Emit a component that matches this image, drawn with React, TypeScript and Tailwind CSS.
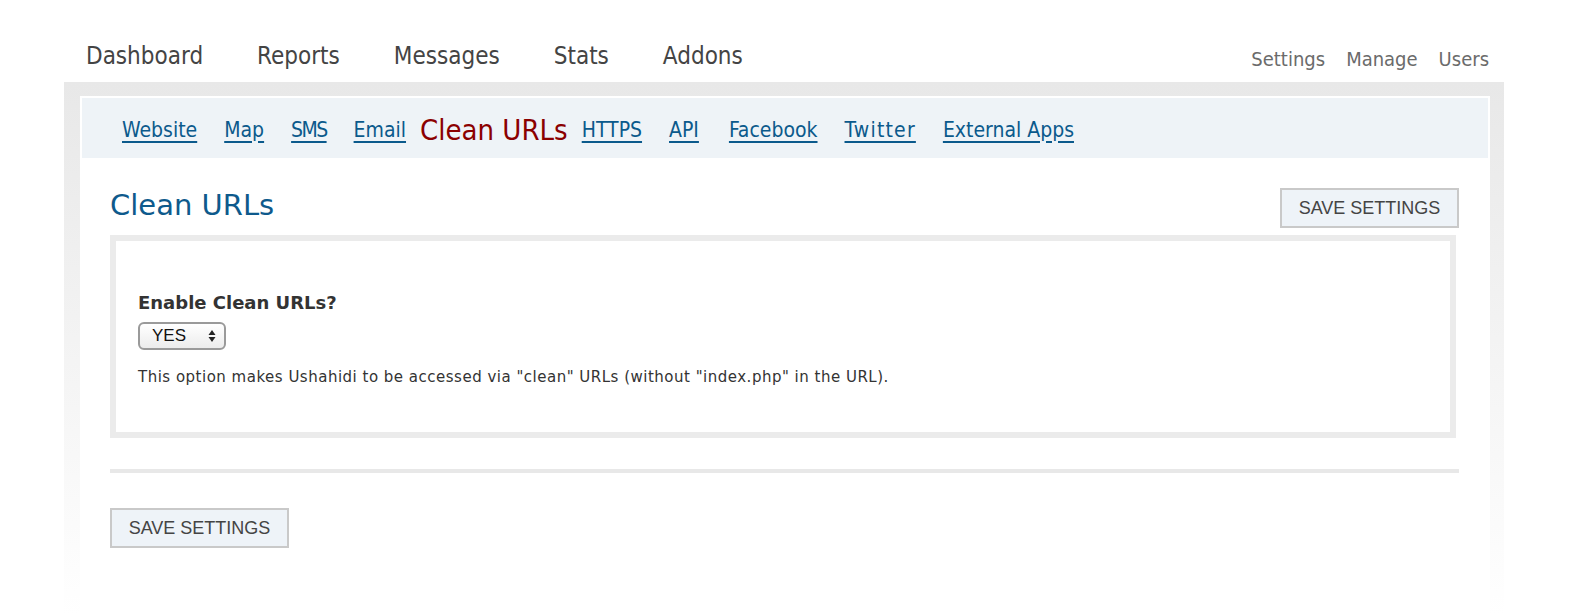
const TOP_NAV = ["Dashboard", "Reports", "Messages", "Stats", "Addons"];
const TOP_RIGHT = ["Settings", "Manage", "Users"];
const SUB_NAV = [
  "Website",
  "Map",
  "SMS",
  "Email",
  "Clean URLs",
  "HTTPS",
  "API",
  "Facebook",
  "Twitter",
  "External Apps",
];

// small per-link spacing tweaks so the condensed fallback lines up
const TRACKING: Record<string, string> = {
  SMS: "tracking-[-1.6px]",
  API: "mr-[30px]",
  Twitter: "tracking-[1.2px]",
};

const condensed = { fontFamily: '"DejaVu Sans Condensed", "DejaVu Sans", sans-serif' };
const regular = { fontFamily: '"DejaVu Sans", sans-serif' };

function SaveButton() {
  return (
    <button
      className="h-[40px] w-[179px] border-2 border-[#c9c9c9] bg-[#eef3f8] font-['Liberation_Sans',Arial,sans-serif] text-[18px] text-[#444]"
      type="button"
    >
      SAVE SETTINGS
    </button>
  );
}

export default function App() {
  return (
    <div className="h-[616px] w-full overflow-hidden bg-white" style={condensed}>
      <div className="ml-[64px] flex h-[82px] w-[1440px] items-end justify-between pb-[8px] pl-[22px] pr-[15px]">
        <nav className="flex gap-[54px] text-[24px] text-[#444]">
          {TOP_NAV.map((item) => (
            <span key={item}>{item}</span>
          ))}
        </nav>
        <nav className="flex gap-[21px] text-[20px] text-[#6b6b6b]">
          {TOP_RIGHT.map((item) => (
            <span key={item}>{item}</span>
          ))}
        </nav>
      </div>

      <div className="ml-[64px] h-[534px] w-[1440px] bg-gradient-to-b from-[#e8e8e8] to-white pl-[16px] pr-[14px] pt-[14px]">
        <div className="h-full bg-white p-[2px]">
          <div className="flex h-[60px] items-center bg-[#eef3f7] pl-[40px] pt-[5px] text-[21px]">
            {SUB_NAV.map((item) =>
              item === "Clean URLs" ? (
                <span key={item} className="mr-[14px] ml-[-13px] text-[29px] leading-none text-[#8b0000]">
                  {item}
                </span>
              ) : (
                <a
                  key={item}
                  className={`mr-[27px] text-[#0b5a8c] underline decoration-2 underline-offset-[4px] ${TRACKING[item] ?? ""}`}
                  href="#"
                >
                  {item}
                </a>
              ),
            )}
          </div>

          <div className="pl-[28px] pr-[29px] pt-[30px]">
            <div className="flex items-start justify-between">
              <h1 className="pt-[1px] text-[29px] leading-[32px] text-[#0e5a8c]" style={regular}>
                Clean URLs
              </h1>
              <SaveButton />
            </div>

            <div className="mr-[3px] mt-[7px] h-[203px] border-[6px] border-[#ebebeb] pl-[22px] pt-[48px]">
              <p className="text-[18px] font-bold text-[#333]" style={regular}>
                Enable Clean URLs?
              </p>
              <div className="mt-[6px] flex h-[28px] w-[88px] items-center justify-between rounded-[6px] border-2 border-[#9a9a9a] bg-gradient-to-b from-white to-[#ececec] pl-[12px] pr-[8px] font-['Liberation_Sans',Arial,sans-serif] text-[17px] text-[#111]">
                <span>YES</span>
                <svg width="8" height="14" viewBox="0 0 8 14">
                  <path d="M4 1 L7.5 6 L0.5 6 Z" fill="#222" />
                  <path d="M4 13 L7.5 8 L0.5 8 Z" fill="#222" />
                </svg>
              </div>
              <p className="mt-[16px] text-[15px] tracking-[0.5px] text-[#333]" style={regular}>
                This option makes Ushahidi to be accessed via "clean" URLs (without "index.php" in the URL).
              </p>
            </div>

            <div className="mt-[31px] h-[4px] bg-[#e8e8e8]" />

            <div className="mt-[35px]">
              <SaveButton />
            </div>
          </div>
        </div>
      </div>
    </div>
  );
}
